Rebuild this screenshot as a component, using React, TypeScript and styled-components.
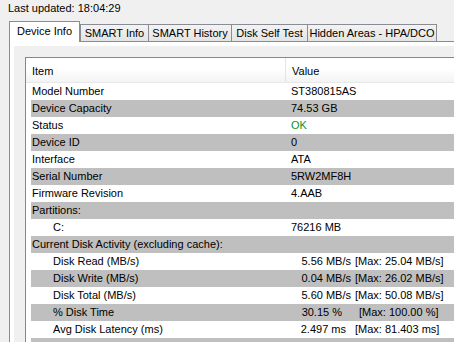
import React from 'react';
import styled, { createGlobalStyle } from 'styled-components';

export const GlobalStyles = createGlobalStyle`
  html, body {
    margin: 0;
    padding: 0;
    background: #f0f0f0;
    overflow: hidden;
  }
  body {
    width: 454px;
    height: 342px;
    font-family: 'Liberation Sans', Arial, sans-serif;
    font-size: 11px;
    color: #000000;
  }
`;

export const Wrapper = styled.div`
  width: 454px;
  height: 342px;
  overflow: hidden;
  display: flex;
  flex-direction: column;
`;

export const Updated = styled.div`
  padding-left: 8px;
  line-height: 17px;
  height: 17px;
  white-space: pre;
`;

export const TabStrip = styled.div`
  display: flex;
  align-items: flex-end;
  margin: 4px 0 0 9px;
  position: relative;
  z-index: 1;
`;

export const Tab = styled.div<{ $w: number; $active?: boolean }>`
  width: ${p => p.$w}px;
  box-sizing: border-box;
  border: 1px solid #898c95;
  border-bottom: none;
  text-align: center;
  white-space: nowrap;
  margin-left: ${p => (p.$active ? 0 : -1)}px;
  background: ${p => (p.$active ? '#ffffff' : 'linear-gradient(#f3f3f3, #e4e4e4)')};
  padding-top: ${p => (p.$active ? 1 : 0)}px;
  height: ${p => (p.$active ? 21 : 17)}px;
  line-height: ${p => (p.$active ? 17 : 16)}px;
  margin-bottom: ${p => (p.$active ? -1 : 0)}px;
  &:nth-child(2) {
    margin-left: 0;
  }
`;

export const Panel = styled.div`
  margin-left: 9px;
  width: 480px;
  flex: 1;
  border: 1px solid #898c95;
  background: #ffffff;
  padding: 4px 0 0 4px;
  display: flex;
`;

export const PanelInner = styled.div`
  flex: 1;
  background: #f0f0f0;
  padding: 11px 0 0 11px;
  display: flex;
`;

export const ListView = styled.div`
  flex: 1;
  border: 1px solid #828790;
  background: #ffffff;
  display: flex;
  flex-direction: column;
`;

export const HeaderRow = styled.div`
  display: flex;
  height: 22px;
  padding-top: 2px;
  line-height: 22px;
  border-bottom: 1px solid #e8e8e8;
  background: linear-gradient(#ffffff 0%, #ffffff 45%, #f3f3f3 100%);
`;

export const HeaderCell = styled.div<{ $w?: number }>`
  ${p => (p.$w ? `width: ${p.$w}px;` : 'flex: 1;')}
  box-sizing: border-box;
  padding-left: 6px;
  border-right: ${p => (p.$w ? '1px solid #e5e5e5' : 'none')};
  margin-top: -2px;
  padding-top: 2px;
`;

export const Rows = styled.div`
  padding-left: 5px;
  display: flex;
  flex-direction: column;
`;

export const Row = styled.div<{ $shade: boolean }>`
  display: flex;
  height: 17px;
  line-height: 17px;
  background: ${p => (p.$shade ? '#bfbfbf' : '#ffffff')};
  white-space: pre;
`;

export const ItemCell = styled.div<{ $sub?: boolean }>`
  width: 255px;
  padding-left: ${p => (p.$sub ? 22 : 1)}px;
  box-sizing: border-box;
`;

export const ValueCell = styled.div<{ $ok?: boolean }>`
  flex: 1;
  padding-left: 5px;
  color: ${p => (p.$ok ? '#129412' : '#000000')};
`;

// current reading, right aligned so it ends at $end; the max part starts at $max
export const Cur = styled.span<{ $end: number; $max: number }>`
  display: inline-block;
  width: ${p => p.$max}px;
  padding-right: ${p => p.$max - p.$end}px;
  box-sizing: border-box;
  text-align: right;
`;

type Item = {
  name: string;
  value?: string;
  sub?: boolean;
  ok?: boolean;
  cur?: [string, number, number];
};

const items: Item[] = [
  { name: 'Model Number', value: 'ST380815AS' },
  { name: 'Device Capacity', value: '74.53 GB' },
  { name: 'Status', value: 'OK', ok: true },
  { name: 'Device ID', value: '0' },
  { name: 'Interface', value: 'ATA' },
  { name: 'Serial Number', value: '5RW2MF8H' },
  { name: 'Firmware Revision', value: '4.AAB' },
  { name: 'Partitions:' },
  { name: 'C:', value: '76216 MB', sub: true },
  { name: 'Current Disk Activity (excluding cache):' },
  { name: 'Disk Read (MB/s)', sub: true, cur: ['5.56 MB/s', 60, 64], value: '[Max: 25.04 MB/s]' },
  { name: 'Disk Write (MB/s)', sub: true, cur: ['0.04 MB/s', 60, 64], value: '[Max: 26.02 MB/s]' },
  { name: 'Disk Total (MB/s)', sub: true, cur: ['5.60 MB/s', 60, 64], value: '[Max: 50.08 MB/s]' },
  { name: '% Disk Time', sub: true, cur: ['30.15 %', 51, 68], value: '[Max: 100.00 %]' },
  { name: 'Avg Disk Latency (ms)', sub: true, cur: ['2.497 ms', 55, 64], value: '[Max: 81.403 ms]' },
  { name: '' },
];

const App = () => {
  return (
    <React.Fragment>
      <GlobalStyles />
      <Wrapper>
        <Updated>Last updated: 18:04:29</Updated>
        <TabStrip>
          <Tab $w={71} $active>Device Info</Tab>
          <Tab $w={69}>SMART Info</Tab>
          <Tab $w={84}>SMART History</Tab>
          <Tab $w={77}>Disk Self Test</Tab>
          <Tab $w={130}>Hidden Areas - HPA/DCO</Tab>
        </TabStrip>
        <Panel>
          <PanelInner>
            <ListView>
              <HeaderRow>
                <HeaderCell $w={260}>Item</HeaderCell>
                <HeaderCell>Value</HeaderCell>
              </HeaderRow>
              <Rows>
                {items.map((item, index) => (
                  <Row key={index} $shade={index % 2 === 1}>
                    <ItemCell $sub={item.sub}>{item.name}</ItemCell>
                    <ValueCell $ok={item.ok}>
                      {item.cur ? (
                        <Cur $end={item.cur[1]} $max={item.cur[2]}>
                          {item.cur[0]}
                        </Cur>
                      ) : null}
                      {item.value}
                    </ValueCell>
                  </Row>
                ))}
              </Rows>
            </ListView>
          </PanelInner>
        </Panel>
      </Wrapper>
    </React.Fragment>
  );
};

export default App;
